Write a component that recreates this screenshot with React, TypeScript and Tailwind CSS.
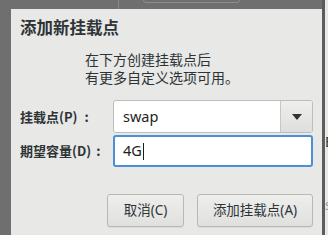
import React from "react";

const font = { fontFamily: '"Noto Sans", "Noto Sans CJK SC", sans-serif' };
const cjk = { fontFamily: '"Noto Sans CJK SC", "Noto Sans", sans-serif' };

export default function App() {
  return (
    <div
      className="relative w-[328px] h-[235px] overflow-hidden bg-[#6f6f6f] flex"
      style={font}
    >
      {/* background window bits */}
      <div className="absolute left-[118px] top-0 w-px h-[9px] bg-[#8a8a8a]" />
      <div className="absolute left-[143px] top-[-6px] w-[97px] h-[9px] rounded-[3px] border border-[#8e8e8e]" />

      <div className="w-[11px] shrink-0" />
      <div className="mt-[9px] w-[311px] h-[226px] bg-[#e8e8e7] flex flex-col pl-[9px] text-[#2e3436]">
        <div className="mt-[8px] h-[21px] leading-[21px] text-[16.5px] font-bold">添加新挂载点</div>
        <div className="mt-[13px] ml-[65px] text-[14px] leading-[18px]">
          <div>在下方创建挂载点后</div>
          <div>有更多自定义选项可用。</div>
        </div>
        <div className="mt-[13px] flex items-center h-[33px]">
          <div className="w-[93px] text-[13px] font-bold flex items-center" style={cjk}>
            挂载点(P)<span className="ml-[7px]">:</span>
          </div>
          <div className="flex w-[200px] h-[33px] rounded-[3px] border border-[#bdbdb9] bg-white overflow-hidden">
            <div className="flex-1 pl-[9px] flex items-center text-[14.5px] text-[#1e1e1e]">swap</div>
            <div className="w-[32px] border-l border-[#c6c6c3] bg-gradient-to-b from-[#efefee] to-[#dededc] flex items-center justify-center">
              <svg width="10" height="6" viewBox="0 0 10 6">
                <path d="M0 0 H10 L5 6 Z" fill="#2e3436" />
              </svg>
            </div>
          </div>
        </div>
        <div className="mt-[2px] flex items-center h-[32px]">
          <div className="w-[93px] text-[13px] font-bold flex items-center" style={cjk}>
            期望容量(D)<span className="ml-[5px]">:</span>
          </div>
          <div className="w-[200px] h-[32px] rounded-[3px] border-2 border-[#4a90d9] bg-white flex items-center pl-[8px] text-[14.5px] text-[#1e1e1e]">
            4G<span className="ml-px w-px h-[17px] bg-[#1e1e1e]" />
          </div>
        </div>
        <div className="mt-[27px] flex gap-[13px] pl-[87px]">
          <button className="w-[77px] h-[33px] rounded-[3px] border border-[#b8b8b5] bg-gradient-to-b from-[#eeeeed] to-[#e0e0de] text-[13.5px] text-[#2e3436] shadow-[0_1px_0_rgba(0,0,0,0.06)]">
            取消(C)
          </button>
          <button className="w-[116px] h-[33px] rounded-[3px] border border-[#b8b8b5] bg-gradient-to-b from-[#eeeeed] to-[#e0e0de] text-[13.5px] text-[#2e3436] shadow-[0_1px_0_rgba(0,0,0,0.06)]">
            添加挂载点(A)
          </button>
        </div>
      </div>
      <div className="w-[3px] shrink-0 bg-[#5c5c5c]" />
      <div className="w-[3px] shrink-0 bg-[#e8e8e7] relative overflow-hidden text-[#2e3436]">
        <span className="absolute left-0 top-[133px] text-[14px] leading-[18px]">E</span>
        <span className="absolute left-0 top-[196px] text-[14px] leading-[18px] text-[#9a9a9a]">s(</span>
      </div>
    </div>
  );
}
